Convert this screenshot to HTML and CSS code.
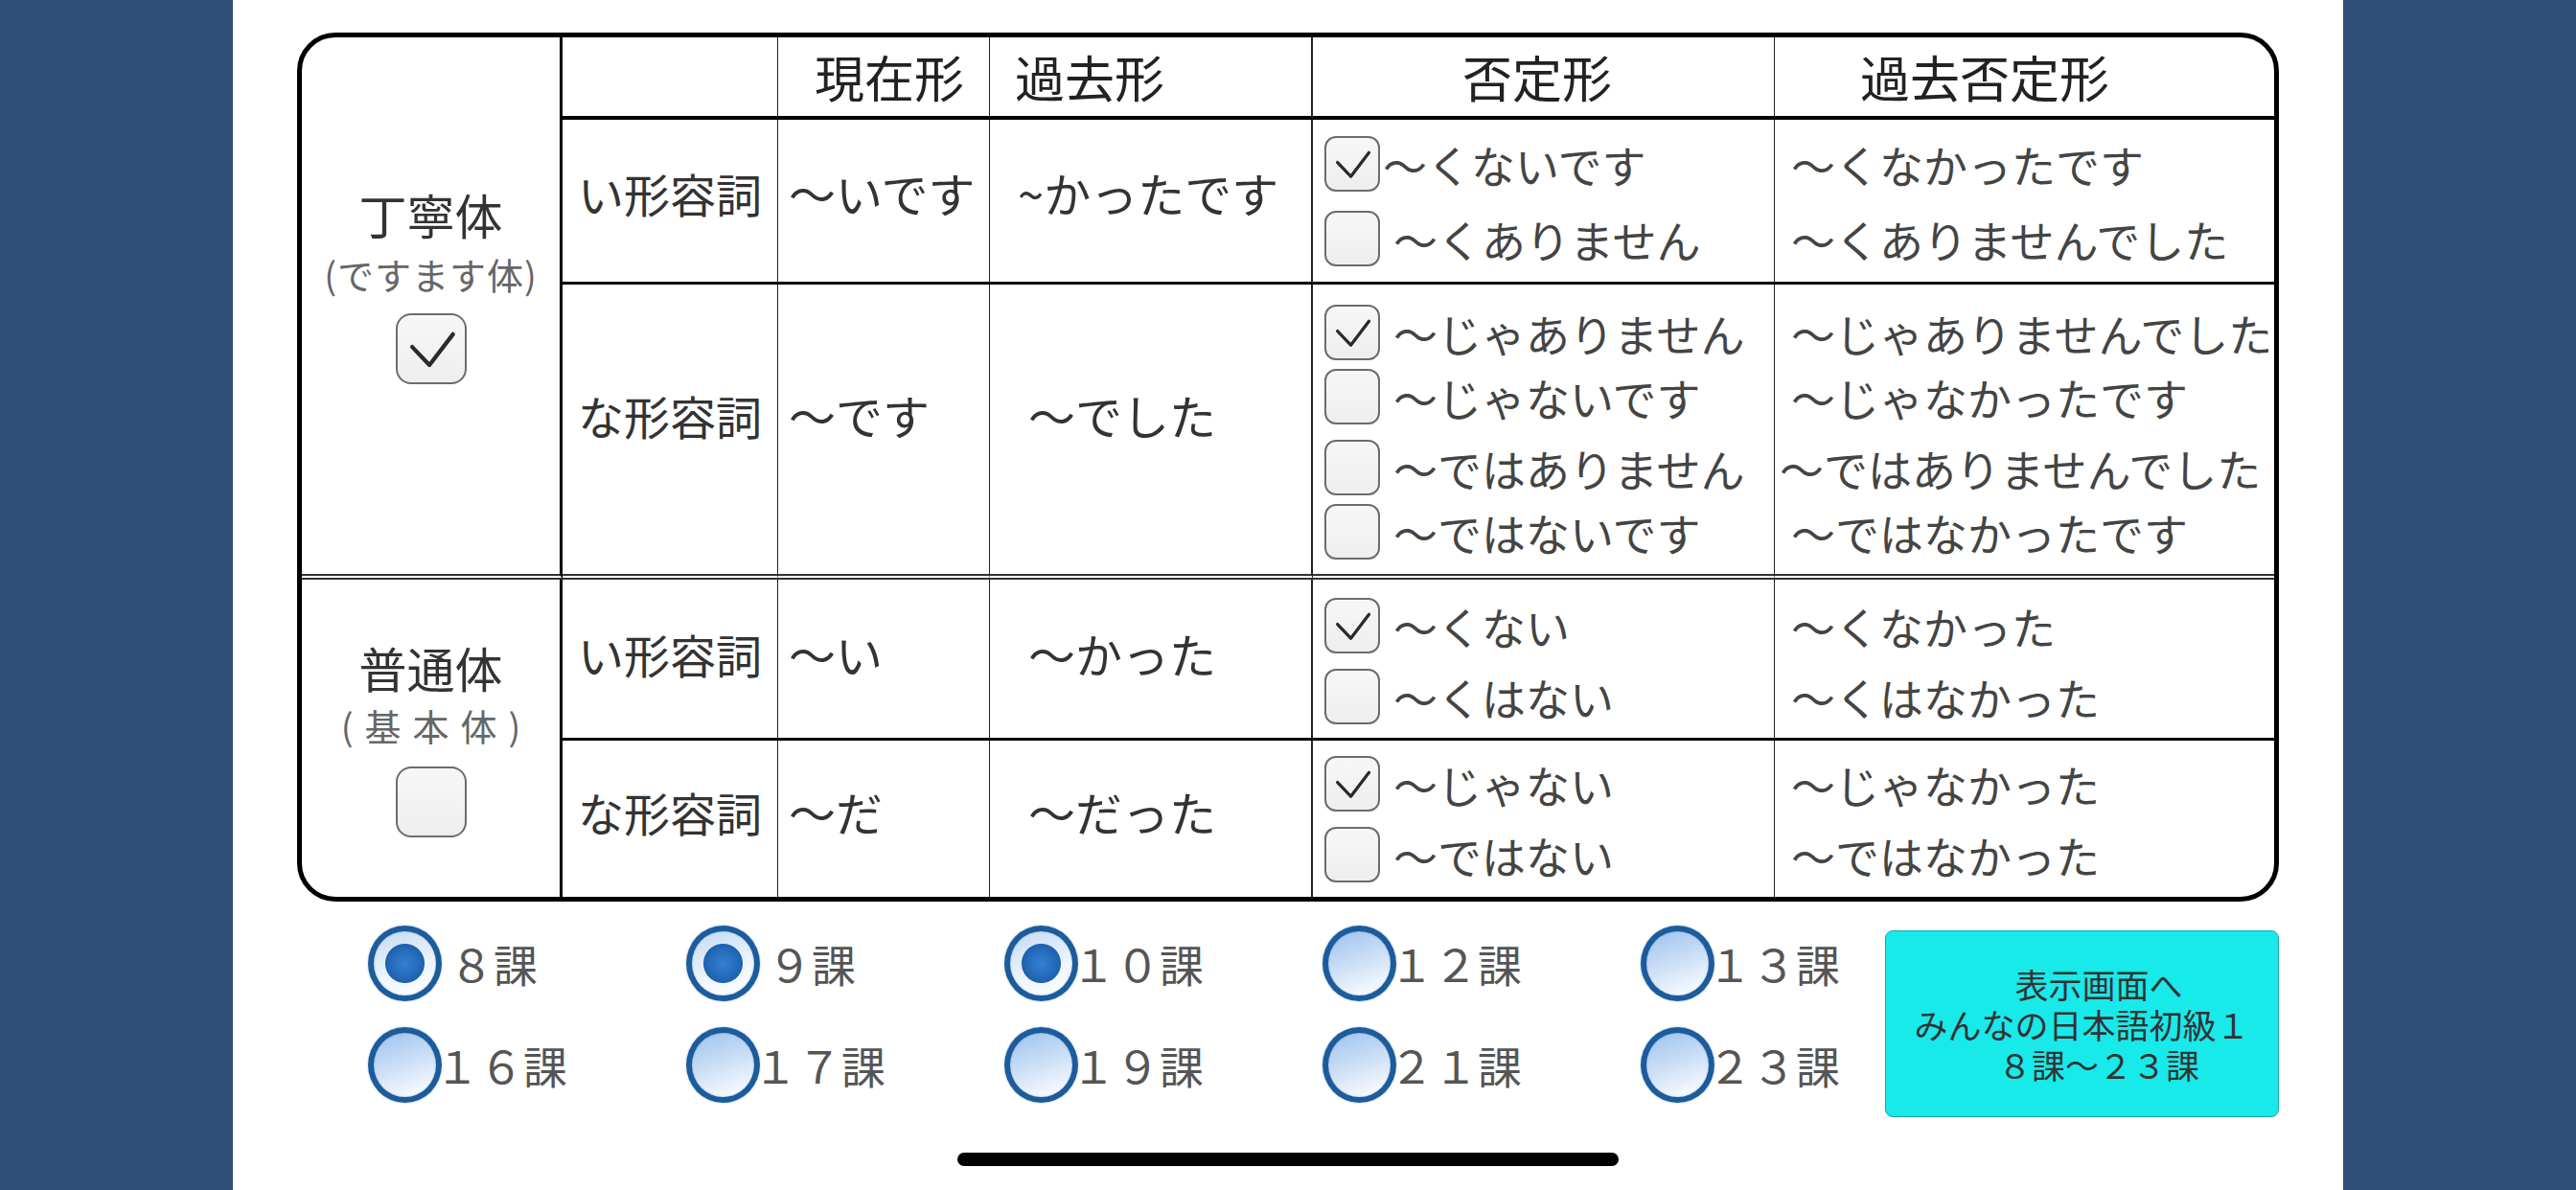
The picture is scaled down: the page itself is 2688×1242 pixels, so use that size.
FILE: index.html
```html
<!DOCTYPE html>
<html lang="ja">
<head>
<meta charset="utf-8">
<title>形容詞の活用</title>
<link rel="stylesheet" href="styles.css">
</head>
<body>
<div class="screen">
  <div class="grid">
    <div class="cell c1 sec1">
      <div class="ttl">丁寧体</div>
      <div class="sub sub1">(ですます体)</div>
      <span class="cb big on"><svg viewBox="0 0 74 74"><path d="M16 35 L35 55 L61 21"/></svg></span>
    </div>
    <div class="cell k2 rh"></div>
    <div class="cell k3 rh hd h-now">現在形</div>
    <div class="cell k4 rh hd h-past">過去形</div>
    <div class="cell k5 rh hd h-neg">否定形</div>
    <div class="cell rh hd h-pneg">過去否定形</div>

    <div class="cell k2 ri lbl p-i">い形容詞</div>
    <div class="cell k3 ri form p-i">〜いです</div>
    <div class="cell k4 ri form past p-i tl">~かったです</div>
    <div class="cell k5 ri opts g20">
      <div class="opt"><span class="cb on"><svg viewBox="0 0 74 74"><path d="M16 35 L35 55 L61 21"/></svg></span><span class="ot tight">〜くないです</span></div>
      <div class="opt"><span class="cb"></span><span class="ot">〜くありません</span></div>
    </div>
    <div class="cell ri lines g20">
      <div class="ln">〜くなかったです</div>
      <div class="ln">〜くありませんでした</div>
    </div>

    <div class="cell k2 rn lbl p-n">な形容詞</div>
    <div class="cell k3 rn form p-n">〜です</div>
    <div class="cell k4 rn form past p-n">〜でした</div>
    <div class="cell k5 rn opts g9">
      <div class="opt"><span class="cb on"><svg viewBox="0 0 74 74"><path d="M16 35 L35 55 L61 21"/></svg></span><span class="ot">〜じゃありません</span></div>
      <div class="opt"><span class="cb"></span><span class="ot">〜じゃないです</span></div>
      <div class="opt mt"><span class="cb"></span><span class="ot">〜ではありません</span></div>
      <div class="opt"><span class="cb"></span><span class="ot">〜ではないです</span></div>
    </div>
    <div class="cell rn lines g9">
      <div class="ln">〜じゃありませんでした</div>
      <div class="ln">〜じゃなかったです</div>
      <div class="ln mt wide">〜ではありませんでした</div>
      <div class="ln">〜ではなかったです</div>
    </div>

    <div class="cell c1b">
      <div class="ttl">普通体</div>
      <div class="sub sub2">(基本体)</div>
      <span class="cb big"></span>
    </div>
    <div class="cell k2 ri lbl p-i2">い形容詞</div>
    <div class="cell k3 ri form p-i2">〜い</div>
    <div class="cell k4 ri form past p-i2">〜かった</div>
    <div class="cell k5 ri opts g16 pt4">
      <div class="opt"><span class="cb on"><svg viewBox="0 0 74 74"><path d="M16 35 L35 55 L61 21"/></svg></span><span class="ot">〜くない</span></div>
      <div class="opt"><span class="cb"></span><span class="ot">〜くはない</span></div>
    </div>
    <div class="cell ri lines g16 pt4">
      <div class="ln">〜くなかった</div>
      <div class="ln">〜くはなかった</div>
    </div>

    <div class="cell k2 lbl p-n2">な形容詞</div>
    <div class="cell k3 form p-n2">〜だ</div>
    <div class="cell k4 form past p-n2">〜だった</div>
    <div class="cell k5 opts g16">
      <div class="opt"><span class="cb on"><svg viewBox="0 0 74 74"><path d="M16 35 L35 55 L61 21"/></svg></span><span class="ot">〜じゃない</span></div>
      <div class="opt"><span class="cb"></span><span class="ot">〜ではない</span></div>
    </div>
    <div class="cell lines g16">
      <div class="ln">〜じゃなかった</div>
      <div class="ln">〜ではなかった</div>
    </div>
  </div>

  <div class="bottom">
    <div class="radios">
      <div class="ritem"><span class="radio sel"></span><span class="rl one">８課</span></div>
      <div class="ritem"><span class="radio sel"></span><span class="rl one">９課</span></div>
      <div class="ritem"><span class="radio sel"></span><span class="rl">１０課</span></div>
      <div class="ritem"><span class="radio"></span><span class="rl">１２課</span></div>
      <div class="ritem"><span class="radio"></span><span class="rl">１３課</span></div>
      <div class="ritem"><span class="radio"></span><span class="rl">１６課</span></div>
      <div class="ritem"><span class="radio"></span><span class="rl">１７課</span></div>
      <div class="ritem"><span class="radio"></span><span class="rl">１９課</span></div>
      <div class="ritem"><span class="radio"></span><span class="rl">２１課</span></div>
      <div class="ritem"><span class="radio"></span><span class="rl">２３課</span></div>
    </div>
    <div class="btn">
      <div class="bl">　表示画面へ</div>
      <div class="bl">みんなの日本語初級１</div>
      <div class="bl">　８課〜２３課</div>
    </div>
  </div>

  <div class="homebar"></div>
</div>
</body>
</html>
```

FILE: styles.css
```css
* { box-sizing: border-box; }
html, body { margin: 0; padding: 0; }
body {
  background: #2f4e78;
  font-family: "Noto Sans CJK JP", "Noto Sans", sans-serif;
  color: #333;
}
.screen {
  width: 2202px;
  height: 1242px;
  margin: 0 auto;
  background: #fff;
  display: flex;
  flex-direction: column;
  padding: 34px 67px 0;
}

/* table */
.grid {
  width: 2068px;
  display: grid;
  grid-template-columns: 272px 225px 221px 337px 482px 521px;
  grid-template-rows: 86px 172px 308px 168px 163px;
  border: 5px solid #000;
  border-radius: 40px;
  overflow: hidden;
}
.cell {
  display: flex;
  align-items: center;
  min-width: 0;
  white-space: nowrap;
  line-height: 1.2;
}
.c1, .c1b {
  flex-direction: column;
  justify-content: center;
  border-right: 3px solid #000;
}
.c1 { grid-row: span 3; border-bottom: 6px double #333; padding-bottom: 43px; }
.c1b { grid-row: span 2; }
.ttl { font-size: 50px; line-height: 56px; color: #333; }
.sub { font-size: 38px; line-height: 44px; color: #666; }
.sub1 { margin-top: 13px; letter-spacing: 1px; }
.sub2 { margin-top: 11px; letter-spacing: 12px; padding-left: 12px; }
.c1 .cb.big { margin-top: 19px; }
.c1b .cb.big { margin-top: 21px; }

.k2, .k3 { border-right: 1px solid #222; }
.k4 { border-right: 2px solid #222; }
.k5 { border-right: 1px solid #222; }
.rh { border-bottom: 4px solid #000; }
.ri { border-bottom: 3px solid #000; }
.rn { border-bottom: 6px double #333; }

.hd { font-size: 52px; color: #222; }
.h-now { padding-left: 38px; }
.h-past { padding-left: 26px; }
.h-neg { padding-left: 156px; }
.h-pneg { padding-left: 89px; }

.lbl { font-size: 48px; justify-content: center; color: #333; }
.form { font-size: 49px; padding-left: 11px; color: #333; }
.past { padding-left: 40px; }
.past.tl { padding-left: 29px; }
.p-i { padding-bottom: 16px; }
.p-n { padding-bottom: 29px; }
.p-i2 { padding-bottom: 10px; }
.p-n2 { padding-bottom: 14px; }

/* options */
.opts, .lines {
  flex-direction: column;
  justify-content: center;
  align-items: flex-start;
  font-size: 46px;
  color: #444;
}
.opts { padding-left: 12px; }
.lines { padding-left: 17px; }
.g20 { gap: 20px; }
.g9 { gap: 9px; padding-top: 6px; }
.g16 { gap: 16px; }
.pt4 { padding-top: 4px; }
.mt { margin-top: 7px; }
.opt { display: flex; align-items: center; height: 58px; }
.ot { margin-left: 14px; line-height: 58px; }
.ot.tight { margin-left: 3px; }
.ln { height: 58px; line-height: 58px; }
.ln.wide { margin-left: -12px; }

.cb {
  width: 58px;
  height: 58px;
  flex: none;
  border: 2px solid #6c6c6c;
  border-radius: 12px;
  background: linear-gradient(#f7f7f7, #eeeeee);
  display: flex;
}
.cb.big { width: 74px; height: 74px; border-radius: 16px; }
.cb svg { width: 100%; height: 100%; }
.cb path {
  fill: none;
  stroke: #2a2a2a;
  stroke-width: 4.5;
  stroke-linecap: round;
  stroke-linejoin: round;
}
.cb:not(.on) svg { display: none; }

/* bottom */
.bottom {
  display: flex;
  align-items: flex-start;
  margin-top: 25px;
}
.radios {
  margin-left: 74px;
  display: grid;
  grid-template-columns: repeat(4, 332px) 251px;
  grid-auto-rows: 79px;
  row-gap: 27px;
}
.ritem { display: flex; align-items: center; }
.radio {
  width: 77px;
  height: 79px;
  flex: none;
  border-radius: 50%;
  border: 6px solid #1c5c9c;
  box-shadow: 0 0 2px rgba(28, 92, 156, 0.5), inset 0 0 2px rgba(28, 92, 156, 0.4);
  background: linear-gradient(160deg, #9dc2ee 0%, #c9ddf5 45%, #f3f8fe 85%, #ffffff 100%);
}
.radio.sel {
  background:
    radial-gradient(circle at 50% 50%, #3580d2 0, #2468b8 16px, #1d5fae 20px, rgba(255,255,255,0) 21px),
    linear-gradient(160deg, #c4daf4 0%, #eef5fd 60%, #ffffff 100%);
}
.rl {
  font-size: 46px;
  color: #555;
  margin-left: -7px;
  line-height: 1.2;
}
.rl.one { margin-left: 8px; }

.btn {
  margin-left: auto;
  margin-top: 5px;
  width: 411px;
  height: 195px;
  background: #18e9e9;
  border: 1.5px solid #19a8a8;
  border-radius: 8px;
  display: flex;
  flex-direction: column;
  align-items: center;
  justify-content: center;
  font-size: 35px;
  color: #333;
}
.bl { height: 42px; line-height: 42px; white-space: nowrap; }

.homebar {
  width: 690px;
  height: 14px;
  border-radius: 7px;
  background: #000;
  margin: 37px auto 0;
}
```
